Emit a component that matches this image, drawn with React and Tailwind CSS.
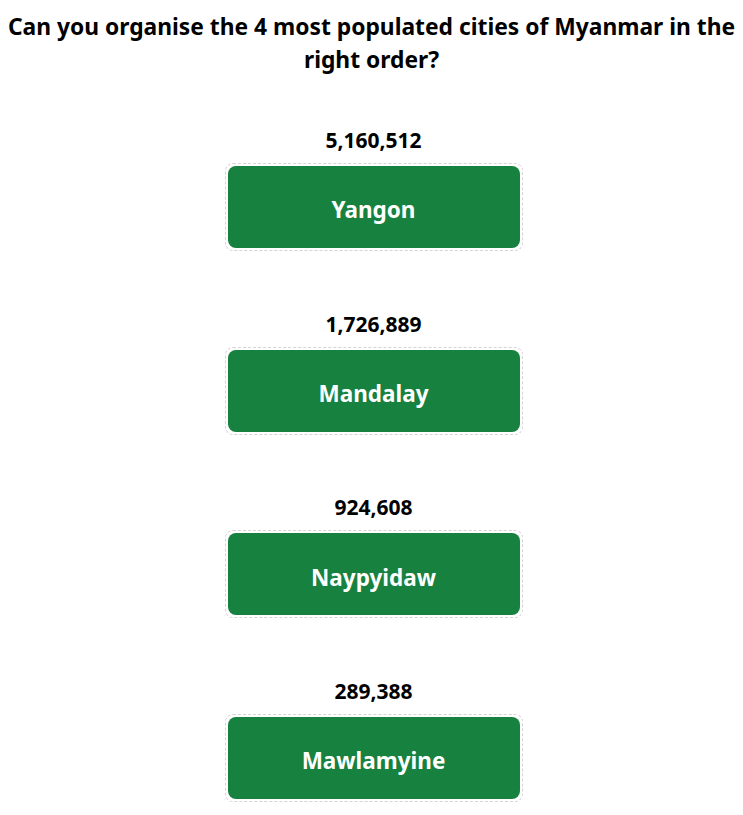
const cities = [
  { name: 'Yangon', population: '5,160,512' },
  { name: 'Mandalay', population: '1,726,889' },
  { name: 'Naypyidaw', population: '924,608' },
  { name: 'Mawlamyine', population: '289,388' },
];

const CityCard = ({ name, population }) => (
  <div className="flex flex-col items-center">
    <p className="text-[21px] font-bold leading-[28px] text-black">{population}</p>
    <div className="mt-[9px] w-[298px] rounded-lg border border-dashed border-[#d4d4d4] p-[2px]">
      <div className="flex h-[82px] items-center justify-center rounded-lg bg-[#178140] pt-[6px]">
        <span className="text-[22.5px] font-bold text-white">{name}</span>
      </div>
    </div>
  </div>
);

export default function App() {
  return (
    <div className="min-h-screen bg-white font-['Noto_Sans',sans-serif]">
      <h1 className="pt-[10px] text-center text-[22.8px] font-bold leading-[33px] text-black">
        Can you organise the 4 most populated cities of Myanmar in the right order?
      </h1>
      <div className="mt-[50px] flex flex-col gap-[58.7px] pl-[4px]">
        {cities.map((c) => (
          <CityCard key={c.name} {...c} />
        ))}
      </div>
    </div>
  );
}
